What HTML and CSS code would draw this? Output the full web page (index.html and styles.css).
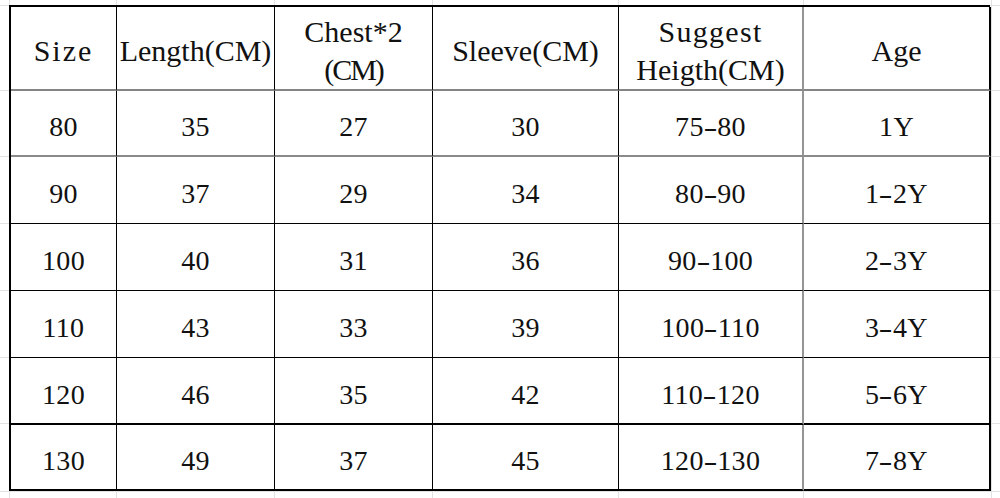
FILE: index.html
```html
<!DOCTYPE html>
<html lang="en">
<head>
<meta charset="utf-8">
<title>Size chart</title>
<link rel="stylesheet" href="styles.css">
</head>
<body>
<div class="sheet">
  <div class="chart">
    <div class="cell head row-head col-size sp-size">Size</div>
    <div class="cell head row-head">Length(CM)</div>
    <div class="cell head row-head"><span>Chest*2</span><span class="cm">(CM)</span></div>
    <div class="cell head row-head">Sleeve(CM)</div>
    <div class="cell head row-head col-gray"><span class="sp-sug">Suggest</span><span>Heigth(CM)</span></div>
    <div class="cell head row-head col-last">Age</div>

    <div class="cell data row-first">80</div>
    <div class="cell data row-first">35</div>
    <div class="cell data row-first">27</div>
    <div class="cell data row-first">30</div>
    <div class="cell data row-first col-gray"><span>75<span class="dash">-</span>80</span></div>
    <div class="cell data row-first col-last">1Y</div>

    <div class="cell data">90</div>
    <div class="cell data">37</div>
    <div class="cell data">29</div>
    <div class="cell data">34</div>
    <div class="cell data col-gray"><span>80<span class="dash">-</span>90</span></div>
    <div class="cell data col-last"><span>1<span class="dash">-</span>2Y</span></div>

    <div class="cell data">100</div>
    <div class="cell data">40</div>
    <div class="cell data">31</div>
    <div class="cell data">36</div>
    <div class="cell data col-gray"><span>90<span class="dash">-</span>100</span></div>
    <div class="cell data col-last"><span>2<span class="dash">-</span>3Y</span></div>

    <div class="cell data">110</div>
    <div class="cell data">43</div>
    <div class="cell data">33</div>
    <div class="cell data">39</div>
    <div class="cell data col-gray"><span>100<span class="dash">-</span>110</span></div>
    <div class="cell data col-last"><span>3<span class="dash">-</span>4Y</span></div>

    <div class="cell data row-thick">120</div>
    <div class="cell data row-thick">46</div>
    <div class="cell data row-thick">35</div>
    <div class="cell data row-thick">42</div>
    <div class="cell data row-thick col-gray"><span>110<span class="dash">-</span>120</span></div>
    <div class="cell data row-thick col-last"><span>5<span class="dash">-</span>6Y</span></div>

    <div class="cell data row-last">130</div>
    <div class="cell data row-last">49</div>
    <div class="cell data row-last">37</div>
    <div class="cell data row-last">45</div>
    <div class="cell data row-last col-gray"><span>120<span class="dash">-</span>130</span></div>
    <div class="cell data row-last col-last"><span>7<span class="dash">-</span>8Y</span></div>
  </div>
</div>
</body>
</html>
```

FILE: styles.css
```css
* {
  box-sizing: border-box;
}

html, body {
  margin: 0;
  padding: 0;
  background: #ffffff;
}

body {
  width: 1000px;
  height: 498px;
  overflow: hidden;
  /* faint spreadsheet gridlines visible around the table */
  background-color: #ffffff;
  background-image:
    linear-gradient(#e2e2e2, #e2e2e2),
    linear-gradient(#e2e2e2, #e2e2e2),
    linear-gradient(#e2e2e2, #e2e2e2),
    linear-gradient(#e2e2e2, #e2e2e2),
    linear-gradient(#e2e2e2, #e2e2e2),
    linear-gradient(#e2e2e2, #e2e2e2),
    linear-gradient(#e2e2e2, #e2e2e2),
    linear-gradient(#e2e2e2, #e2e2e2),
    linear-gradient(#e2e2e2, #e2e2e2),
    linear-gradient(#e2e2e2, #e2e2e2),
    linear-gradient(#e2e2e2, #e2e2e2),
    linear-gradient(#e2e2e2, #e2e2e2),
    linear-gradient(#e2e2e2, #e2e2e2),
    linear-gradient(#e2e2e2, #e2e2e2),
    linear-gradient(#e2e2e2, #e2e2e2);
  background-repeat: no-repeat;
  background-size:
    1px 100%, 1px 100%, 1px 100%, 1px 100%, 1px 100%, 1px 100%, 1px 100%,
    100% 1px, 100% 1px, 100% 1px, 100% 1px, 100% 1px, 100% 1px, 100% 1px, 100% 1px;
  background-position:
    9px 0, 116px 0, 274px 0, 432px 0, 618px 0, 803px 0, 991px 0,
    0 5px, 0 90px, 0 156px, 0 223px, 0 290px, 0 357px, 0 423px, 0 491px;
}

.sheet {
  padding: 5px 0 0 9px;
}

.chart {
  display: grid;
  grid-template-columns: 106px 158px 158px 186px 185px 187px;
  grid-template-rows: 84px 66px 67px 67px 67px 67px 66px;
  width: 981px;
  border-top: 2px solid #000;
  border-left: 2px solid #000;
  background: #ffffff;
  color: #111;
  font-family: "Liberation Serif", "Times New Roman", serif;
}

.cell {
  display: flex;
  flex-direction: column;
  align-items: center;
  justify-content: center;
  text-align: center;
  border-right: 1px solid #000;
  border-bottom: 1px solid #000;
  background: #fff;
}

.head {
  font-size: 30px;
  line-height: 38px;
  padding-top: 6px;
}

.data {
  font-size: 28px;
  line-height: 34px;
  padding-top: 8px;
  letter-spacing: 0.3px;
}

.dash {
  display: inline-block;
  margin: 0 2px;
  transform: scaleX(1.5);
}

.row-head {
  border-bottom: 2px solid #858585;
}

.row-first {
  border-bottom: 2px solid #8a8a8a;
}

.row-thick {
  border-bottom: 2px solid #000;
}

.row-last {
  border-bottom: 2px solid #000;
}

.col-gray {
  border-right: 2px solid #959595;
}

.col-last {
  border-right: 2px solid #000;
}

.sp-size {
  letter-spacing: 2px;
}

.sp-sug {
  letter-spacing: 1.3px;
}

.cm {
  letter-spacing: -2px;
}
```
